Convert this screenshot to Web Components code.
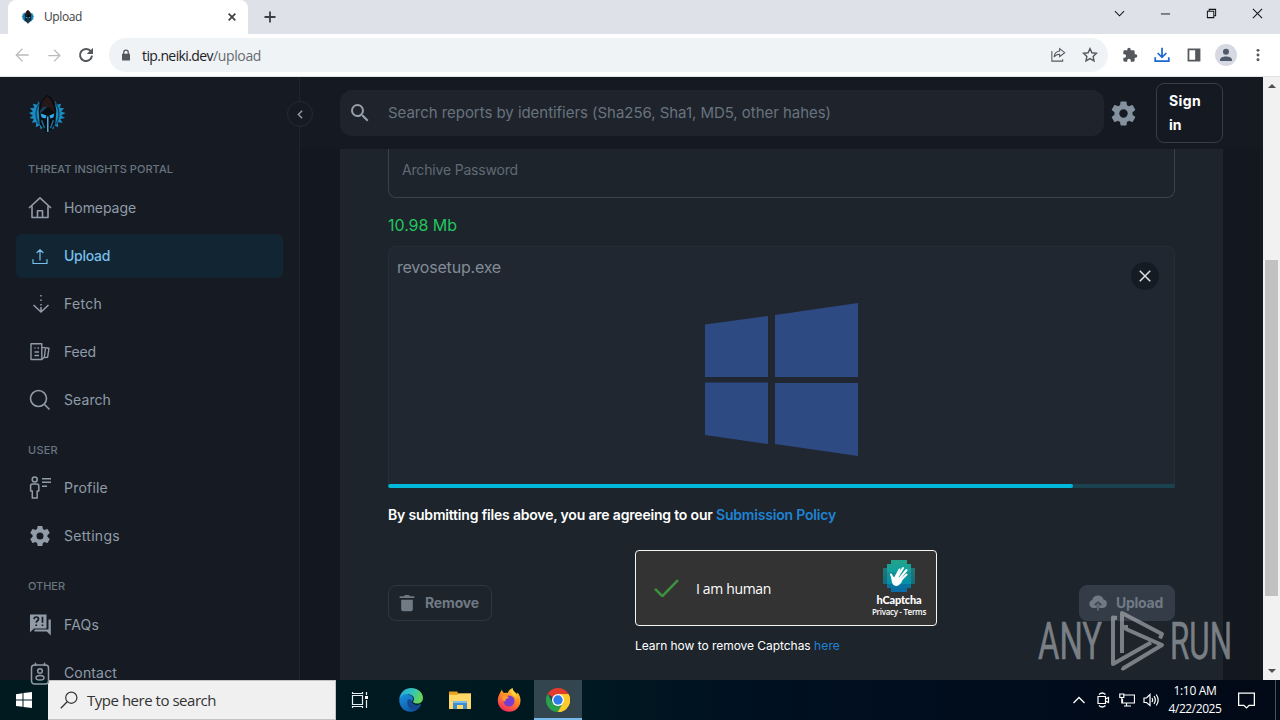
<!DOCTYPE html>
<html lang="en">
<head>
<meta charset="utf-8">
<title>Upload</title>
<style>
    html, body { margin: 0; height: 100%; overflow: hidden; }
    body { font-family: "Open Sans", "Liberation Sans", sans-serif; background: #161b23; }
</style>
</head>
<body>
<desktop-screen>
    <browser-tabs slot="window"></browser-tabs>
    <browser-toolbar slot="window"></browser-toolbar>
    <page-view slot="window">
        <side-nav slot="nav">
            <nav-group label="THREAT INSIGHTS PORTAL" label-width="145">
                <nav-item icon="home" width="72">Homepage</nav-item>
                <nav-item icon="upload" width="46" active>Upload</nav-item>
                <nav-item icon="fetch" width="38">Fetch</nav-item>
                <nav-item icon="feed" width="32">Feed</nav-item>
                <nav-item icon="search" width="47">Search</nav-item>
            </nav-group>
            <nav-group label="USER" label-width="30" style="--label-top:7px">
                <nav-item icon="profile" width="44">Profile</nav-item>
                <nav-item icon="gear" width="56">Settings</nav-item>
            </nav-group>
            <nav-group label="OTHER" label-width="37" style="padding-top:1px">
                <nav-item icon="faq" width="35">FAQs</nav-item>
                <nav-item icon="contact" width="53">Contact</nav-item>
            </nav-group>
        </side-nav>
        <top-bar slot="main"></top-bar>
        <upload-card slot="main"></upload-card>
    </page-view>
    <task-bar slot="taskbar"></task-bar>
    <run-watermark slot="overlay"></run-watermark>
</desktop-screen>

<script>
const GEAR = '<path fill="currentColor" d="M19.43 12.98c.04-.32.07-.64.07-.98s-.03-.66-.07-.98l2.11-1.65c.19-.15.24-.42.12-.64l-2-3.46c-.12-.22-.39-.3-.61-.22l-2.49 1c-.52-.4-1.08-.73-1.69-.98l-.38-2.65A.488.488 0 0 0 14 2h-4c-.25 0-.46.18-.49.42l-.38 2.65c-.61.25-1.17.59-1.69.98l-2.49-1c-.23-.09-.49 0-.61.22l-2 3.46c-.13.22-.07.49.12.64l2.11 1.65c-.04.32-.07.65-.07.98s.03.66.07.98l-2.11 1.65c-.19.15-.24.42-.12.64l2 3.46c.12.22.39.3.61.22l2.49-1c.52.4 1.08.73 1.69.98l.38 2.65c.03.24.24.42.49.42h4c.25 0 .46-.18.49-.42l.38-2.65c.61-.25 1.17-.59 1.69-.98l2.49 1c.23.09.49 0 .61-.22l2-3.46c.12-.22.07-.49-.12-.64zM12 15.500a3.500 3.500 0 1 1 0-7 3.500 3.500 0 0 1 0 7z"/>';

const LOGO = `
    <g fill="#1b8cc2">
        <path d="M11 6L9.500 10 5 9l1.500 4L2 13.500l3 3.500-4 1.500 4 2.500-3.500 2.500 4.500 1-2 4 4.500-.5L8 33l4-2 1 4 3-2-2-9-2-9z"/>
        <path d="M28 6l1.500 4 4.500-1-1.500 4 4.500.5-3 3.500 4.500 1.500-4.500 2.500 4 2.500-5 1 2.500 4-5-.5.5 5-4-2-1 4-3-2 2-9 2-9z"/>
    </g>
    <path d="M12 8q-7 10-1 22M28 8q7 10 1 22" stroke="#0e4a6b" stroke-width="1.500" fill="none"/>
    <path d="M19.500 0c4 1 9.500 8 9.500 17l-1 13-4 5-4 4-4-4-4-5-1-13C10.500 10 15 3 19.500 0z" fill="#0c0d12"/>
    <path d="M19.500 1l4 4 3 8 .5 5-4.500-5-5-1-4.500 3 1.500-8z" fill="#271718"/>
    <path d="M12 19c0-5 4-8 8-7l-5 5z" fill="#15415c"/>
    <path d="M13 19l6 2-1 3-4-1zM27 19l-5 2 1 3 3-1z" fill="#2badea"/>
    <path d="M20.300 22v16" stroke="#4fc0ea" stroke-width="1.400"/>
    <path d="M14 26l3 8M26 26l-3 8" stroke="#1b6c98" stroke-width="1.500"/>`;

// name: [viewBox, content]
const ICONS = {
    logo: ['0 0 40 40', LOGO],
    gear: ['0 0 24 24', GEAR],
    home: ['0 0 24 24', '<path d="M1 12L12 1.800 23 12M4 10v11.500h16V10M9.500 21.500v-6.700h5v6.700" fill="none" stroke="currentColor" stroke-width="1.600" stroke-linejoin="round"/>'],
    upload: ['0 0 24 24', '<path d="M5 15.500v4h14v-4M12 16V5.800M9 8.500L12 5.800 15 8.500" fill="none" stroke="currentColor" stroke-width="1.200" stroke-linecap="round" stroke-linejoin="round"/>'],
    fetch: ['0 0 24 24', '<path d="M13 3v13" stroke="currentColor" stroke-width="1.500" stroke-dasharray="1.500 3"/><path d="M13 15v5M5.500 13l7.500 7 7.500-7" fill="none" stroke="currentColor" stroke-width="1.500"/>'],
    feed: ['0 0 24 24', '<path d="M3 3.700h10.800v15.800H3zM13.800 7.400l7.200.8-1.400 9-3 .3M17.500 8l-1.200 9.300-2.500 2.200M6.500 8h1M9.500 8h1.500M6.500 12h4.500M6.500 15.500h4.500" fill="none" stroke="currentColor" stroke-width="1.400" stroke-linejoin="round"/>'],
    search: ['0 0 24 24', '<circle cx="10.500" cy="10.500" r="8" fill="none" stroke="currentColor" stroke-width="1.600"/><path d="M16 16l5.500 5.500" stroke="currentColor" stroke-width="1.600"/>'],
    profile: ['0 0 24 24', '<g fill="none" stroke="currentColor" stroke-width="1.500" stroke-linejoin="round"><circle cx="6.700" cy="3.500" r="2.500"/><path d="M4.500 8h4.300q2 0 2 2v5H9.200v7H4.300v-7H2.600v-5q0-2 1.900-2zM14 2.700h9M14 6.300h9M14 10.200h5"/></g>'],
    faq: ['0 0 24 24', '<path d="M2 1.500h16.500v14H6l-4 3.800z" fill="currentColor"/><path d="M20.500 6.500h2.300v16l-4-4H6.500v-2h14z" fill="currentColor"/><path d="M6 6.200q.2-2.200 2.300-2.200 2.200 0 2.200 1.900 0 1.100-1.200 1.900-1 .7-1 2M14.500 3.800v6M8.200 11.400v1.700M14.500 11.400v1.700" fill="none" stroke="#161c24" stroke-width="1.700"/>'],
    contact: ['0 0 24 24', '<g fill="none" stroke="currentColor" stroke-width="1.500"><rect x="3.500" y="4" width="17" height="19" rx="3"/><path d="M7.500 1.800V5M16.500 1.800V5"/><circle cx="12" cy="10" r="2.300"/><ellipse cx="12" cy="16.800" rx="4" ry="2.300"/></g>'],
    find: ['0 0 24 24', '<path fill="currentColor" d="M15.500 14h-.79l-.28-.27A6.471 6.471 0 0 0 16 9.500 6.500 6.500 0 1 0 9.500 16c1.610 0 3.090-.59 4.230-1.570l.27.28v.79l5 4.990L20.490 19l-4.990-5zm-6 0C7.010 14 5 11.990 5 9.500S7.010 5 9.500 5 14 7.010 14 9.500 11.990 14 9.500 14z"/>'],
    chevronLeft: ['0 0 24 24', '<path d="M15 5l-7 7 7 7" fill="none" stroke="currentColor" stroke-width="2.600"/>'],
    trash: ['0 0 24 24', '<path fill="currentColor" d="M3 5q0-1 1-1h4.500q.5-1.500 2-1.500h3q1.500 0 2 1.500H20q1 0 1 1t-1 1H4q-1 0-1-1zM5 8h14v11.500q0 2.500-2.500 2.500h-9Q5 22 5 19.500z"/>'],
    cloud: ['0 0 24 24', '<path fill="currentColor" d="M6.500 18A5 5 0 0 1 5 8.300 7.200 7.200 0 0 1 18.700 7.800 5.200 5.200 0 0 1 18 18h-4.500v-4.500l2 1.500 1-1.300L12 10l-4.500 3.700 1 1.300 2-1.500V18z"/><path d="M12 12v9" stroke="currentColor" stroke-width="1.700"/>'],
    close: ['0 0 24 24', '<path d="M5 5l14 14M19 5L5 19" stroke="currentColor" stroke-width="2"/>'],
    closeBold: ['0 0 24 24', '<path d="M4 4l16 16M20 4L4 20" stroke="currentColor" stroke-width="4"/>'],
    plus: ['0 0 24 24', '<path d="M12 1v22M1 12h22" stroke="currentColor" stroke-width="3.600"/>'],
    back: ['0 0 24 24', '<path fill="currentColor" d="M22 11H5.800l7.500-7.500L12 2 2 12l10 10 1.300-1.500L5.800 13H22z"/>'],
    forward: ['0 0 24 24', '<path fill="currentColor" d="M2 11h16.200l-7.500-7.500L12 2l10 10-10 10-1.300-1.500 7.500-7.500H2z"/>'],
    reload: ['0 0 24 24', '<path d="M19.500 7A9 9 0 1 0 21 13" fill="none" stroke="currentColor" stroke-width="3"/><path fill="currentColor" d="M22.500 1v9.500H13z"/>'],
    lock: ['0 0 24 24', '<path fill="currentColor" d="M4 9.500h16V22q0 1-1 1H5q-1 0-1-1z"/><path d="M7.500 10V6.500a4.500 4.500 0 0 1 9 0V10" fill="none" stroke="currentColor" stroke-width="2.500"/>'],
    share: ['0 0 24 24', '<path d="M2.800 6v15.200H19v-3M14.500 2.500l7.500 6-7.500 6v-3.700c-4 0-6.500 1.200-8.300 4.200.3-5 3.800-8.500 8.300-9z" fill="none" stroke="currentColor" stroke-width="1.600"/>'],
    star: ['0 0 24 24', '<path d="M12 2.500l2.900 6.200 6.800.8-5 4.700 1.300 6.700-6-3.400-6 3.400 1.300-6.700-5-4.700 6.800-.8z" fill="none" stroke="currentColor" stroke-width="2.100"/>'],
    puzzle: ['0 0 24 24', '<path fill="currentColor" d="M20.500 11H19V7c0-1.100-.9-2-2-2h-4V3.500a2.500 2.500 0 0 0-5 0V5H4c-1.100 0-2 .9-2 2v3.800h1.500a2.700 2.700 0 0 1 0 5.400H2V20c0 1.100.9 2 2 2h3.800v-1.500a2.700 2.700 0 0 1 5.400 0V22H17c1.100 0 2-.9 2-2v-4h1.500a2.500 2.500 0 0 0 0-5z"/>'],
    download: ['0 0 24 24', '<path d="M12 1v14M5.500 9l6.500 6.500L18.500 9M1.800 15.500v5.700h20.400v-5.700" fill="none" stroke="currentColor" stroke-width="2.600"/>'],
    panel: ['0 0 24 24', '<path fill="currentColor" fill-rule="evenodd" d="M1 1h22v22H1zM4 4v16h10V4z"/>'],
    person: ['0 0 24 24', '<circle cx="12" cy="12" r="12" fill="#d6d9e2"/><circle cx="12" cy="8.500" r="3.300" fill="#50586b"/><path fill="#50586b" d="M5.500 18.500v-1.300c0-2.500 3.500-3.700 6.500-3.700s6.500 1.200 6.500 3.700v1.300z"/>'],
    dots: ['0 0 24 24', '<g fill="currentColor"><circle cx="12" cy="4" r="2.500"/><circle cx="12" cy="12" r="2.500"/><circle cx="12" cy="20" r="2.500"/></g>'],
    chevronDown: ['0 0 12 12', '<path d="M1 3.500l5 5 5-5" fill="none" stroke="currentColor" stroke-width="1.100"/>'],
    chevronUp: ['0 0 12 12', '<path d="M.5 9L6 3.500 11.500 9" fill="none" stroke="currentColor" stroke-width="1.300"/>'],
    minimize: ['0 0 12 12', '<path d="M1 6.500h10" stroke="currentColor"/>'],
    restore: ['0 0 12 12', '<path d="M1.500 3.500h7v7h-7zM3.500 3.500v-2h7v7h-2" fill="none" stroke="currentColor" stroke-width="1.100"/>'],
    closeThin: ['0 0 12 12', '<path d="M1 1l10 10M11 1L1 11" stroke="currentColor" stroke-width="1.100"/>'],
    triUp: ['0 0 8 8', '<path d="M0 6l4-4 4 4z" fill="currentColor"/>'],
    triDown: ['0 0 8 8', '<path d="M0 2l4 4 4-4z" fill="currentColor"/>'],
    check: ['0 0 24 18', '<path d="M1 9.500l7 7L23 1" fill="none" stroke="#3f9142" stroke-width="2.400"/>'],
    windows: ['0 0 154 154', '<g fill="#2d4a82"><path d="M0 21.500l63-8.500V74H0zM70 12l83-12v74H70zM0 79.500h63V141L0 132zM70 80h83v73L70 141z"/></g>'],
    start: ['0 0 16 16', '<g fill="#fff"><path d="M0 2.200l6.500-.9v6.200H0zM7.500 1.100L16 0v7.500H7.500zM0 8.500h6.500v6.300L0 13.900zM7.500 8.500H16V16l-8.500-1.100z"/></g>'],
    winSearch: ['0 0 18 18', '<circle cx="11.300" cy="6.700" r="5.600" fill="none" stroke="currentColor" stroke-width="1.200"/><path d="M7.200 10.800L.8 17.200" stroke="currentColor" stroke-width="1.300"/>'],
    taskView: ['0 0 18 18', '<g fill="none" stroke="#e8eef0" stroke-width="1.200"><path d="M1.500 4.500h10v9h-10zM1.500 1v1.500h10V1M1.500 17v-1.500h10V17M15.500 1v3M15.500 9v8"/></g><path d="M14 5h3v3h-3z" fill="#fff"/>'],
    edge: ['0 0 24 24', '<defs><linearGradient id="e1" x1="0" y1="0" x2="1" y2=".3"><stop offset="0" stop-color="#22a5dd"/><stop offset=".6" stop-color="#35c4b8"/><stop offset="1" stop-color="#66d557"/></linearGradient><linearGradient id="e2" x1="0" y1="0" x2=".6" y2="1"><stop offset="0" stop-color="#1893df"/><stop offset="1" stop-color="#1157a5"/></linearGradient></defs><path fill="url(#e2)" d="M.4 10.500C1 6 6 5 10 6.500c4 1.500 5 4 3.500 6-1 1.500-.5 3.500 2.500 4.200 2 .5 4.300 0 6-.8-1.500 5-6 8.100-11 7.900C4 23.500-.5 17 .4 10.500z"/><path fill="#134a8f" d="M8.500 12.500c-1 5 2 9.500 7.500 10 2.500-1 5-3.500 6-6.600-2 1-4 1.300-6 .8-2.500-.6-3.600-2-3-3.500-1.500-2.500-4-2.500-4.500-.7z"/><path fill="url(#e1)" d="M.4 10.500C1.500 4 6.500 0 12 0c7 0 12 4.800 12 10 0 3.500-2.500 5.500-5.500 5.500-2.500 0-4.500-.8-4.500-1.800 0-.8 1-1.200 1-3C15 8.500 12 6 8 6 4.500 6 1.800 7.500.4 10.500z"/>'],
    folder: ['0 0 24 24', '<path fill="#e9a21d" d="M1 3.500h8l1.500 2H23V8H1z"/><path fill="#ffd867" d="M1 6.800h8.500l1.500-1.300h12V21H1z"/><path fill="#3b8ed0" d="M5 13h14v8h-4v-4H9v4H5z"/><path fill="#7abced" d="M5 13h14v2H5z"/>'],
    firefox: ['0 0 24 24', '<defs><linearGradient id="f1" x1=".8" y1="0" x2=".3" y2="1"><stop offset="0" stop-color="#ffdc3b"/><stop offset=".45" stop-color="#ff8a24"/><stop offset="1" stop-color="#f52660"/></linearGradient></defs><path fill="url(#f1)" d="M2.500 6c1-2.500 2-3.500 2.500-4.500.3 2 1 2.500 2 3.500 2-.5 3-.2 4 0C11 3 13 1 15.500 0c0 3 3.500 4.500 4.500 6l.5-1.500c2 2 3 5 3 8A11.300 11.300 0 0 1 .8 12.500C.8 10 1.500 8 2.500 6z"/><circle cx="12" cy="13" r="5.500" fill="#7a3bd0"/><path fill="#ff9b27" d="M5 9c2-2 6-1.500 7 1-2 .2-3.500 1-3.500 2.500C7 15 5 12 5 9z"/><path fill="#ffd43b" d="M15.500 0c0 4 4.500 5.500 4.500 11-1.500-3-4-3-5-4.500-1.200-1.700-1-4.500.5-6.500z"/>'],
    chrome: ['0 0 24 24', '<path fill="#e33b2e" d="M12 12L1.600 6A12 12 0 0 1 22.400 6z"/><path fill="#fdc92b" d="M12 12V6h10.400A12 12 0 0 1 12 24z"/><path fill="#29a04b" d="M1.600 6A12 12 0 0 0 12 24l5.200-9L12 12 6.800 15z"/><path fill="#fdc92b" d="M17.200 15L12 24a12 12 0 0 0 10.400-18H12z"/><circle cx="12" cy="12" r="6" fill="#fff"/><circle cx="12" cy="12" r="4.700" fill="#2d7de9"/>'],
    meetNow: ['0 0 16 16', '<path d="M3 4.500h7.500v7H3zM10.500 7l3-1.500v5l-3-1.500M4 2.500Q7-.5 10.500 2.500M4 13.500q3 3 6.500 0" fill="none" stroke="currentColor" stroke-width="1.200"/>'],
    network: ['0 0 16 14', '<path d="M4.500 2H15.500v8H3.500V6M7.500 10v3M5 13h7M.8 1h4v3.500h-4zM2.800 4.500V10.500" fill="none" stroke="currentColor" stroke-width="1.200"/>'],
    sound: ['0 0 17 14', '<path d="M1 5v4.500h2.500L7 12.500V1.500L3.500 5zM9 5q1.300 2 0 4M11 3.200q2.700 3.800 0 7.600M13.200 1.500q4 5.500 0 11" fill="none" stroke="currentColor" stroke-width="1.200"/>'],
    action: ['0 0 16 16', '<path d="M.6 1h14.800v11.500H10.500L8 15l-2.500-2.500H.6z" fill="none" stroke="currentColor" stroke-width="1.200"/>'],
};

class UiIcon extends HTMLElement {
    constructor() {
        super();
        this.attachShadow({ mode: 'open' });
    }

    connectedCallback() {
        const [box, content] = ICONS[this.getAttribute('name')];
        const size = this.getAttribute('size') || 24;
        this.shadowRoot.innerHTML = `
            <style>
            :host { display: block; flex: none; }
            svg { display: block; width: ${size}px; }
            </style>
            <svg viewBox="${box}">${content}</svg>
        `;
    }
}
customElements.define('ui-icon', UiIcon);

// One line of text, tracked so that it takes the given width
class TextRun extends HTMLElement {
    constructor() {
        super();
        this.attachShadow({ mode: 'open' });
        // no line breaks in here: white-space: pre would draw them
        this.shadowRoot.innerHTML = '<style>:host { display: inline-block; white-space: pre; flex: none; }</style><slot></slot>';
    }

    connectedCallback() {
        const target = Number(this.getAttribute('width'));
        if (!target) return;
        const natural = this.getBoundingClientRect().width;
        const count = this.textContent.length;
        this.style.letterSpacing = `${(target - natural) / count}px`;
    }
}

// Shared base: each part of the screen only gives its markup
class ScreenPart extends HTMLElement {
    constructor() {
        super();
        this.attachShadow({ mode: 'open' });
    }

    connectedCallback() {
        this.shadowRoot.innerHTML = this.render();
    }
}

customElements.define('desktop-screen', class extends ScreenPart {
    render() {
        return `
            <style>
            :host { display: flex; flex-direction: column; position: relative; width: 1280px; height: 720px; overflow: hidden; }
            .window { flex: 1; min-height: 0; display: flex; flex-direction: column; }
            </style>
            <div class="window"><slot name="window"></slot></div>
            <slot name="taskbar"></slot>
            <slot name="overlay"></slot>
        `;
    }
});

customElements.define('browser-tabs', class extends ScreenPart {
    render() {
        return `
            <style>
            :host { display: flex; height: 34px; flex: none; background: #dee1e8; padding-left: 8px; color: #3c4043; }
            .tab { box-sizing: border-box; width: 240px; background: #fff; border-radius: 8px 8px 0 0; display: flex; align-items: center; padding: 0 11px 0 13px; font-size: 12px; }
            .tab text-run { margin-left: 9px; padding-bottom: 1px; }
            .tab .x { margin-left: auto; }
            .add { margin: 11px 0 0 16px; }
            .controls { margin-left: auto; display: flex; gap: 35px; padding: 8px 17px 0 0; color: #111; }
            </style>
            <div class="tab">
                <ui-icon name="logo" size="14"></ui-icon>
                <text-run width="38">Upload</text-run>
                <ui-icon class="x" name="closeBold" size="10"></ui-icon>
            </div>
            <ui-icon class="add" name="plus" size="12"></ui-icon>
            <div class="controls">
                <ui-icon name="chevronDown" size="11"></ui-icon>
                <ui-icon name="minimize" size="11"></ui-icon>
                <ui-icon name="restore" size="11"></ui-icon>
                <ui-icon name="closeThin" size="11"></ui-icon>
            </div>
        `;
    }
});

customElements.define('browser-toolbar', class extends ScreenPart {
    render() {
        return `
            <style>
            :host { display: flex; align-items: center; box-sizing: border-box; height: 43px; flex: none; background: #fff; border-bottom: 1px solid #dfe3e6; padding: 0 6px 0 14px; color: #54585d; }
            .nav { display: flex; align-items: center; gap: 17px; color: #bbb; }
            .nav :last-child { color: #54585d; margin-left: -1px; }
            .omnibox { box-sizing: border-box; display: flex; align-items: center; width: 999px; height: 34px; margin-left: 15px; border-radius: 17px; background: #f0f3f5; padding: 0 10px 0 11px; font-size: 14px; }
            .url { margin-left: 10px; flex: 1; display: flex; color: #666b70; }
            .url .host { color: #202124; }
            .omnibox ui-icon + ui-icon { margin-left: 16px; }
            .actions { display: grid; grid-template-columns: repeat(5, 32px); place-items: center; margin-left: 6px; }
            </style>
            <div class="nav">
                <ui-icon name="back" size="16"></ui-icon>
                <ui-icon name="forward" size="15"></ui-icon>
                <ui-icon name="reload" size="16"></ui-icon>
            </div>
            <div class="omnibox">
                <ui-icon name="lock" size="12"></ui-icon>
                <div class="url"><text-run class="host" width="71">tip.neiki.dev</text-run><text-run width="48">/upload</text-run></div>
                <ui-icon name="share" size="16"></ui-icon>
                <ui-icon name="star" size="16"></ui-icon>
            </div>
            <div class="actions">
                <ui-icon name="puzzle" size="16"></ui-icon>
                <ui-icon name="download" size="16" style="color:#1a67d2"></ui-icon>
                <ui-icon name="panel" size="14"></ui-icon>
                <ui-icon name="person" size="22"></ui-icon>
                <ui-icon name="dots" size="14"></ui-icon>
            </div>
        `;
    }
});

customElements.define('page-view', class extends ScreenPart {
    render() {
        return `
            <style>
            :host { display: flex; flex: 1; min-height: 0; background: #151b23; font-family: Inter, "Liberation Sans", sans-serif; }
            main { flex: 1; min-width: 0; display: flex; flex-direction: column; }
            .scrollbar { box-sizing: border-box; width: 17px; background: #f1f1f1; display: flex; flex-direction: column; align-items: center; padding: 5px 0; color: #505050; }
            .thumb { width: 13px; height: 336px; margin: 170px 0 auto; background: #c1c1c1; }
            </style>
            <slot name="nav"></slot>
            <main><slot name="main"></slot></main>
            <div class="scrollbar">
                <ui-icon name="triUp" size="8"></ui-icon>
                <div class="thumb"></div>
                <ui-icon name="triDown" size="8"></ui-icon>
            </div>
        `;
    }
});

customElements.define('side-nav', class extends ScreenPart {
    render() {
        return `
            <style>
            :host { display: block; box-sizing: border-box; position: relative; width: 300px; flex: none; padding: 18px 16px 0; border-right: 1px solid #1e252d; background: #161b23; }
            .logo { margin-left: 12px; height: 51px; }
            .toggle { position: absolute; right: -14px; top: 24px; width: 24px; height: 24px; border: 1px solid #242b34; border-radius: 50%; background: #161b23; color: #919eab; display: flex; align-items: center; justify-content: center; z-index: 1; }
            </style>
            <ui-icon class="logo" name="logo" size="39"></ui-icon>
            <slot></slot>
            <div class="toggle"><ui-icon name="chevronLeft" size="13"></ui-icon></div>
        `;
    }
});

customElements.define('nav-group', class extends ScreenPart {
    render() {
        return `
            <style>
            :host { display: block; }
            .label { box-sizing: border-box; height: 40px; padding: var(--label-top, 5px) 12px 0; display: flex; align-items: center; font-size: 11px; font-weight: 500; color: #69747f; }
            </style>
            <div class="label"><text-run width="${this.getAttribute('label-width')}">${this.getAttribute('label')}</text-run></div>
            <slot></slot>
        `;
    }
});

customElements.define('nav-item', class extends ScreenPart {
    render() {
        return `
            <style>
            :host { display: flex; align-items: center; box-sizing: border-box; width: 267px; height: 44px; margin-bottom: 4px; padding-left: 12px; border-radius: 6px; font-size: 14px; color: #919ca8; }
            :host([active]) { background: #122532; color: #77bfea; font-weight: 500; }
            text-run { margin-left: 12px; padding-bottom: 2px; }
            </style>
            <ui-icon name="${this.getAttribute('icon')}" size="24"></ui-icon>
            <text-run width="${this.getAttribute('width')}">${this.textContent}</text-run>
        `;
    }
});

customElements.define('top-bar', class extends ScreenPart {
    render() {
        return `
            <style>
            :host { display: flex; align-items: center; box-sizing: border-box; height: 72px; flex: none; padding: 0 40px; background: #151a22; }
            .search { box-sizing: border-box; width: 764px; height: 46px; border-radius: 12px; background: #1e232c; display: flex; align-items: center; padding-left: 8px; color: #96a0aa; }
            .search text-run { margin-left: 16px; padding-bottom: 2px; font-size: 15px; color: #69737e; }
            .gear { margin-left: 5px; color: #84919e; }
            .sign { box-sizing: border-box; width: 67px; height: 60px; margin-left: auto; padding: 5px 12px; border: 1px solid #373e47; border-radius: 8px; font-size: 14px; font-weight: 700; line-height: 24px; color: #fff; }
            </style>
            <div class="search">
                <ui-icon name="find" size="24"></ui-icon>
                <text-run width="443">Search reports by identifiers (Sha256, Sha1, MD5, other hahes)</text-run>
            </div>
            <ui-icon class="gear" name="gear" size="29"></ui-icon>
            <div class="sign"><text-run width="32">Sign</text-run><br>in</div>
        `;
    }
});

customElements.define('file-drop', class extends ScreenPart {
    render() {
        return `
            <style>
            :host { display: block; box-sizing: border-box; position: relative; height: 242px; border: 1px solid #252d38; border-bottom: 0; border-radius: 8px 8px 0 0; background: #202731; }
            .name { padding: 8px 0 0 8px; font-size: 16px; line-height: 24px; height: 24px; color: #838c96; }
            .preview { display: flex; justify-content: center; margin-top: 24px; }
            .remove { position: absolute; right: 15px; top: 15px; width: 28px; height: 28px; border-radius: 50%; background: #141b22; color: #dde1e4; display: flex; align-items: center; justify-content: center; }
            .bar { position: absolute; left: -1px; right: -1px; bottom: 0; height: 4px; border-radius: 2px; background: #1b4250; overflow: hidden; }
            .bar div { width: 685px; height: 4px; border-radius: 2px; background: #00b8d9; }
            </style>
            <div class="name"><text-run width="104">${this.textContent}</text-run></div>
            <div class="preview"><ui-icon name="windows" size="154"></ui-icon></div>
            <div class="remove"><ui-icon name="close" size="18"></ui-icon></div>
            <div class="bar"><div></div></div>
        `;
    }
});

customElements.define('captcha-box', class extends ScreenPart {
    render() {
        // mosaic disc, 8 x 8 cells with the corners left out
        const inset = [2, 1, 0, 0, 0, 0, 1, 2];
        const rows = ['#1db69b', '#18aa9d', '#12a49f', '#0fa0a7', '#079aa9', '#0592ab', '#027eb0', '#0571b0'];
        const cells = rows.map((fill, r) => {
            let out = '';
            for (let c = inset[r]; c < 8 - inset[r]; c++) {
                const light = (c === 0 || c === 7) ? 0.6 : 0.85 + ((c * 3 + r) % 3) * 0.07;
                out += `<rect x="${c * 4}" y="${r * 4}" width="4.050" height="4.050" fill="${fill}" opacity="${light}"/>`;
            }
            return out;
        }).join('');
        return `
            <style>
            :host { display: flex; align-items: center; box-sizing: border-box; width: 302px; height: 76px; border: 1px solid #f5f5f5; border-radius: 4px; background: #333; color: #fff; padding: 0 7px 0 18px; font-family: "Open Sans", sans-serif; }
            .text { margin-left: 17px; padding-top: 1px; flex: 1; font-size: 14px; }
            .brand { width: 60px; display: flex; flex-direction: column; align-items: center; padding-left: 1px; }
            .brand svg { display: block; width: 32px; }
            .brand b { font: 900 11px/13px Lato, sans-serif; margin-top: 1px; height: 13px; }
            .links { font-size: 8px; line-height: 11px; font-weight: 600; height: 11px; }
            </style>
            <ui-icon name="check" size="25"></ui-icon>
            <div class="text"><text-run width="75">I am human</text-run></div>
            <div class="brand">
                <svg viewBox="0 0 32 32">${cells}
                    <g stroke="#fff" stroke-width="2" stroke-linecap="round"><path d="M12 18l4.500-8.500M14 18l6-10M17 18l6.500-8M18.500 19.500l5-5M10 19L8 14.500"/></g>
                    <path fill="#fff" d="M8 15l3.500 2.500 2-1.500 6 4q-1 3.500-3.500 5-3.500 2-6-.5-1.700-3-2-9.500z"/>
                </svg>
                <b><text-run width="45">hCaptcha</text-run></b>
                <div class="links"><text-run width="54">Privacy - Terms</text-run></div>
            </div>
        `;
    }
});

customElements.define('action-button', class extends ScreenPart {
    render() {
        return `
            <style>
            :host { display: flex; align-items: center; box-sizing: border-box; height: 36px; border: 1px solid #2f3740; border-radius: 8px; padding: 0 12px 0 8px; gap: 8px; font-size: 14px; font-weight: 700; color: #707a84; }
            :host([filled]) { border-color: #343d47; background: #343d47; padding-right: 11px; }
            text-run { padding-bottom: 2px; }
            </style>
            <ui-icon name="${this.getAttribute('icon')}" size="20"></ui-icon>
            <text-run width="${this.getAttribute('width')}">${this.textContent}</text-run>
        `;
    }
});

customElements.define('upload-card', class extends ScreenPart {
    render() {
        return `
            <style>
            :host { display: block; flex: 1; min-height: 0; overflow: hidden; background: #131820; padding: 0 40px; }
            .card { box-sizing: border-box; width: 883px; height: 100%; padding: 0 48px; background: #1d242c; overflow: hidden; }
            .field { box-sizing: border-box; height: 49px; border: 1px solid #394149; border-top: 0; border-radius: 0 0 8px 8px; padding: 11px 13px; font-size: 14px; line-height: 20px; color: #606a75; }
            .size { height: 48px; display: flex; align-items: center; padding-top: 6px; box-sizing: border-box; font-size: 16px; color: #22c55e; }
            .terms { display: flex; margin-top: 17px; font-size: 14px; line-height: 20px; font-weight: 600; color: #fff; }
            .terms + .row { margin-top: 25px; }
            a { color: #1f83d4; }
            .row { display: grid; grid-template-columns: 247px 302px 1fr; align-items: start; }
            .row action-button { justify-self: start; margin-top: 35px; }
            .row action-button:last-child { justify-self: end; }
            .hint { display: flex; margin-top: 10px; font-size: 12px; line-height: 20px; color: #fff; }
            </style>
            <div class="card">
                <div class="field"><text-run width="116">Archive Password</text-run></div>
                <div class="size"><text-run width="69">10.98 Mb</text-run></div>
                <file-drop>revosetup.exe</file-drop>
                <div class="terms"><text-run width="328">By submitting files above, you are agreeing to our </text-run><a><text-run width="120">Submission Policy</text-run></a></div>
                <div class="row">
                    <action-button icon="trash" width="54">Remove</action-button>
                    <div>
                        <captcha-box></captcha-box>
                        <div class="hint"><text-run width="179">Learn how to remove Captchas </text-run><a><text-run width="26">here</text-run></a></div>
                    </div>
                    <action-button icon="cloud" width="47" filled>Upload</action-button>
                </div>
            </div>
        `;
    }
});

customElements.define('task-bar', class extends ScreenPart {
    render() {
        return `
            <style>
            :host { display: flex; align-items: stretch; height: 40px; flex: none; background: linear-gradient(90deg, #001a20 0, #001921 45%, #000f20 62%, #020917 100%); color: #fff; }
            .cell { width: 48px; display: flex; align-items: center; justify-content: center; }
            .search { box-sizing: border-box; width: 288px; border: 1px solid #c4c4c4; border-width: 1px 1px 1px 0; background: #f0f0f0; display: flex; align-items: center; padding-left: 12px; font-size: 15px; color: #333; }
            .search text-run { margin-left: 9px; }
            .apps { display: flex; gap: 1px; margin-left: 3px; }
            .active { box-sizing: border-box; background: #33454e; border-bottom: 2px solid #76b9ed; padding-top: 1px; }
            .tray { margin-left: auto; display: flex; align-items: center; padding-right: 20px; }
            .tray ui-icon + ui-icon { margin-left: 8px; }
            .clock { width: 64px; display: flex; flex-direction: column; align-items: center; font-size: 12px; margin: 0 4px 0 3px; }
            .clock text-run { line-height: 18px; }
            .show { width: 1px; margin-right: 4px; background: #4a5058; }
            </style>
            <div class="cell"><ui-icon name="start" size="16"></ui-icon></div>
            <div class="search"><ui-icon name="winSearch" size="18"></ui-icon><text-run width="129">Type here to search</text-run></div>
            <div class="cell"><ui-icon name="taskView" size="18"></ui-icon></div>
            <div class="apps">
                <div class="cell"><ui-icon name="edge" size="24"></ui-icon></div>
                <div class="cell"><ui-icon name="folder" size="24"></ui-icon></div>
                <div class="cell"><ui-icon name="firefox" size="24"></ui-icon></div>
                <div class="cell active"><ui-icon name="chrome" size="24"></ui-icon></div>
            </div>
            <div class="tray">
                <ui-icon name="chevronUp" size="12"></ui-icon>
                <ui-icon name="meetNow" size="16" style="margin-left:10px"></ui-icon>
                <ui-icon name="network" size="16"></ui-icon>
                <ui-icon name="sound" size="17"></ui-icon>
                <div class="clock"><text-run width="43">1:10 AM</text-run><text-run width="53">4/22/2025</text-run></div>
                <ui-icon name="action" size="17" style="margin-left:7px"></ui-icon>
            </div>
            <div class="show"></div>
        `;
    }
});

customElements.define('run-watermark', class extends ScreenPart {
    render() {
        return `
            <style>
            :host { position: absolute; left: 1036px; top: 606px; opacity: .62; pointer-events: none; }
            svg { display: block; overflow: visible; }
            text { font: 400 51px Roboto, sans-serif; fill: #b4b8bc; stroke: #b4b8bc; stroke-width: .5px; }
            </style>
            <svg width="198" height="70" viewBox="0 0 198 70">
                <text x="2" y="53" textLength="64" lengthAdjust="spacingAndGlyphs">ANY</text>
                <text x="134" y="53" textLength="62" lengthAdjust="spacingAndGlyphs">RUN</text>
                <g fill="none" stroke="#b4b8bc" stroke-width="4" stroke-linejoin="round">
                    <path d="M81 12l-4-.5v46.500l38-21.500"/>
                    <path d="M86 47V7l40 21-2 4.500M90 19v4l36 16-39 23.500-1-1"/>
                </g>
            </svg>
        `;
    }
});

// defined last, when the text that it measures is in place
customElements.define('text-run', TextRun);
</script>
</body>
</html>
